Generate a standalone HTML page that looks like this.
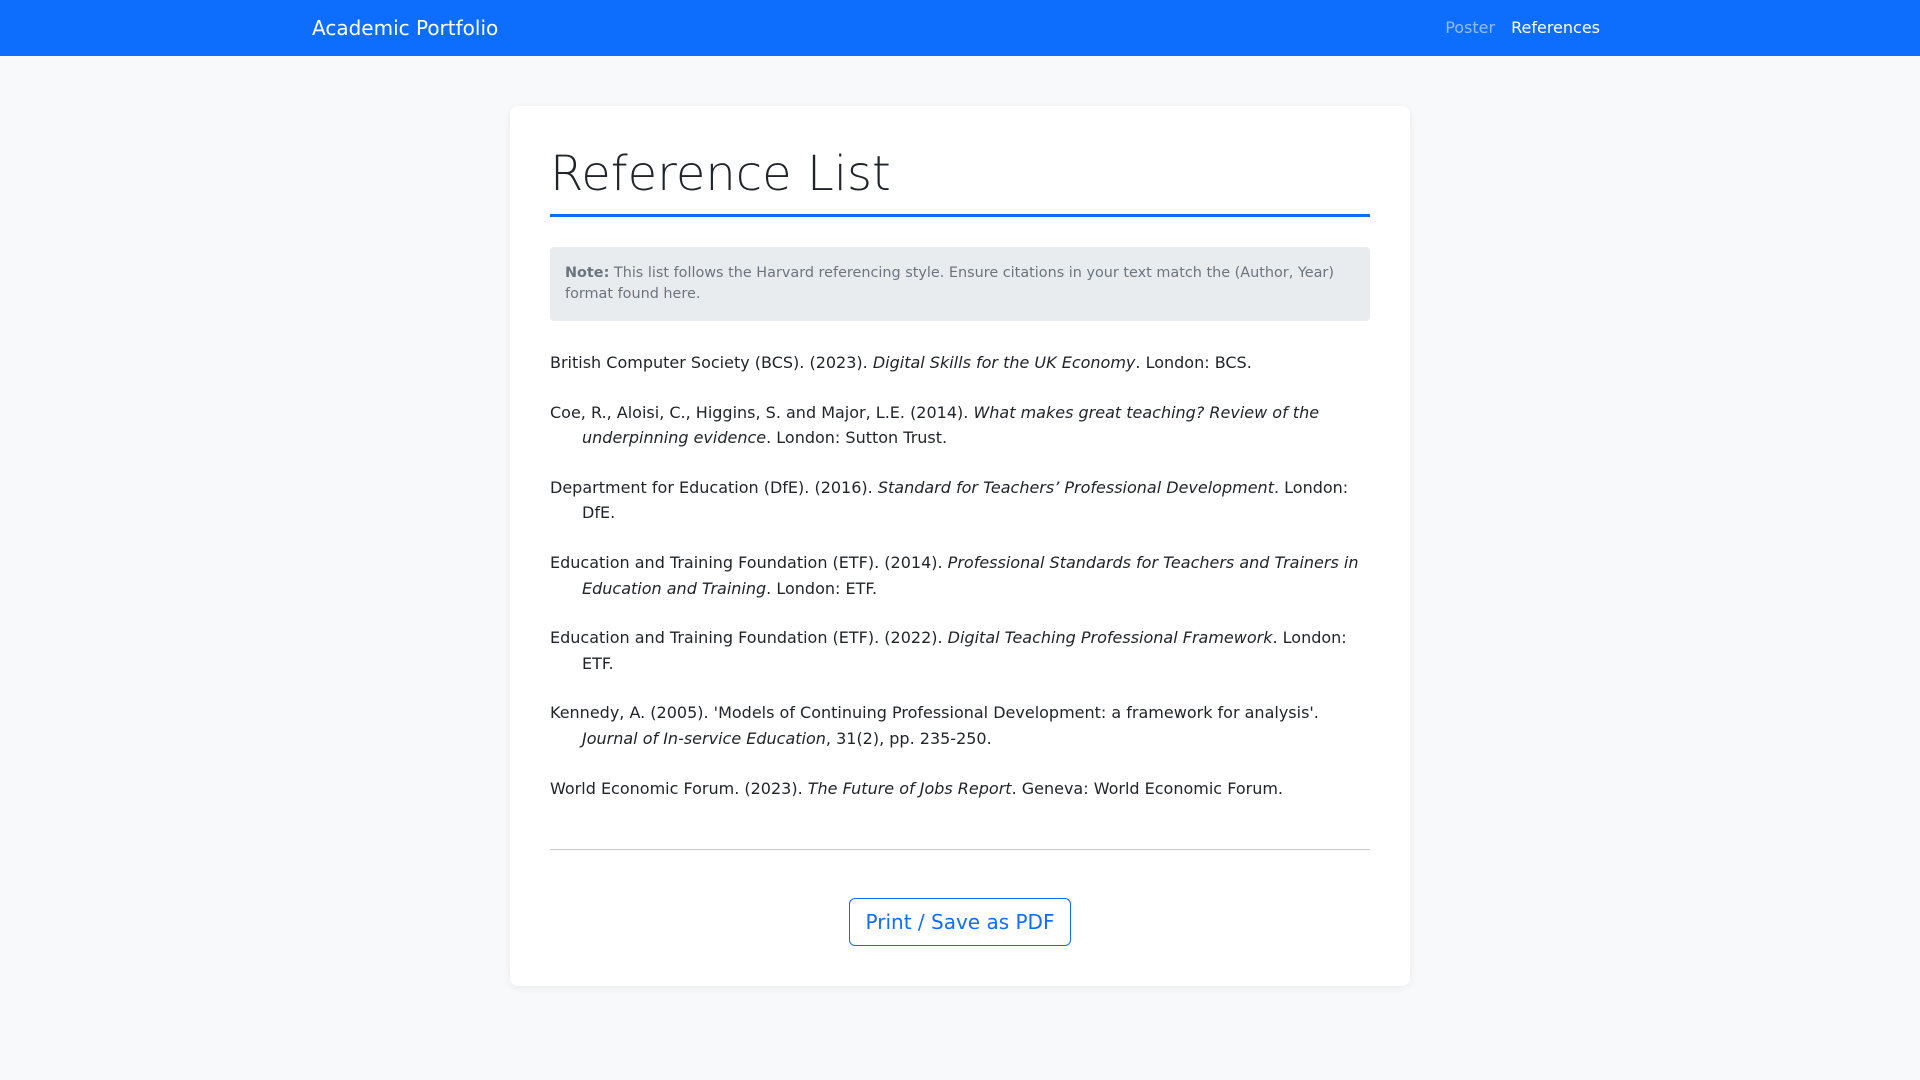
<!DOCTYPE html>
<html><head><meta charset="utf-8"><style>
*{box-sizing:border-box;margin:0;padding:0}
body{width:1920px;height:1080px;background:#f8f9fa;font-family:"DejaVu Sans","Liberation Sans",sans-serif;color:#212529;font-size:16px;overflow:hidden}
.nav{height:56px;background:#0d6efd;position:relative}
.brand{position:absolute;left:312px;top:14px;font-size:20px;color:#fff;line-height:28px}
.links{position:absolute;right:320px;top:16px;font-size:16px;line-height:24px}
.links span{margin-left:16px;color:rgba(255,255,255,.55)}
.links span.a{color:#fff}
.card{position:absolute;left:510px;top:106px;width:900px;height:880px;background:#fff;border-radius:8px;box-shadow:0 2px 8px rgba(0,0,0,.06);padding:40px}
h1{font-size:48px;font-weight:200;line-height:57px;padding-bottom:11px;border-bottom:3px solid #0d6efd;color:#212529}
.note{margin-top:30px;background:#e9ecef;border-radius:4px;padding:16px 15px;font-size:14.4px;line-height:21px;color:#6c757d}
.refs{margin-top:29px}
.refs p{line-height:25.6px;margin-bottom:24px;padding-left:32px;text-indent:-32px}
hr{border:0;border-top:1px solid #c8cbce;margin-top:48px}
.btn{display:block;margin:48px auto 0;width:222px;height:48px;border:1px solid #0d6efd;border-radius:6px;color:#0d6efd;font-size:20px;line-height:46px;text-align:center}
</style></head><body>
<div class="nav"><div class="brand">Academic Portfolio</div><div class="links"><span>Poster</span><span class="a">References</span></div></div>
<div class="card">
<h1>Reference List</h1>
<div class="note"><b>Note:</b> This list follows the Harvard referencing style. Ensure citations in your text match the (Author, Year) format found here.</div>
<div class="refs">
<p>British Computer Society (BCS). (2023). <i>Digital Skills for the UK Economy</i>. London: BCS.</p>
<p>Coe, R., Aloisi, C., Higgins, S. and Major, L.E. (2014). <i>What makes great teaching? Review of the underpinning evidence</i>. London: Sutton Trust.</p>
<p>Department for Education (DfE). (2016). <i>Standard for Teachers’ Professional Development</i>. London: DfE.</p>
<p>Education and Training Foundation (ETF). (2014). <i>Professional Standards for Teachers and Trainers in Education and Training</i>. London: ETF.</p>
<p>Education and Training Foundation (ETF). (2022). <i>Digital Teaching Professional Framework</i>. London: ETF.</p>
<p>Kennedy, A. (2005). 'Models of Continuing Professional Development: a framework for analysis'. <i>Journal of In-service Education</i>, 31(2), pp. 235-250.</p>
<p>World Economic Forum. (2023). <i>The Future of Jobs Report</i>. Geneva: World Economic Forum.</p>
</div>
<hr>
<div class="btn">Print / Save as PDF</div>
</div>
</body></html>
